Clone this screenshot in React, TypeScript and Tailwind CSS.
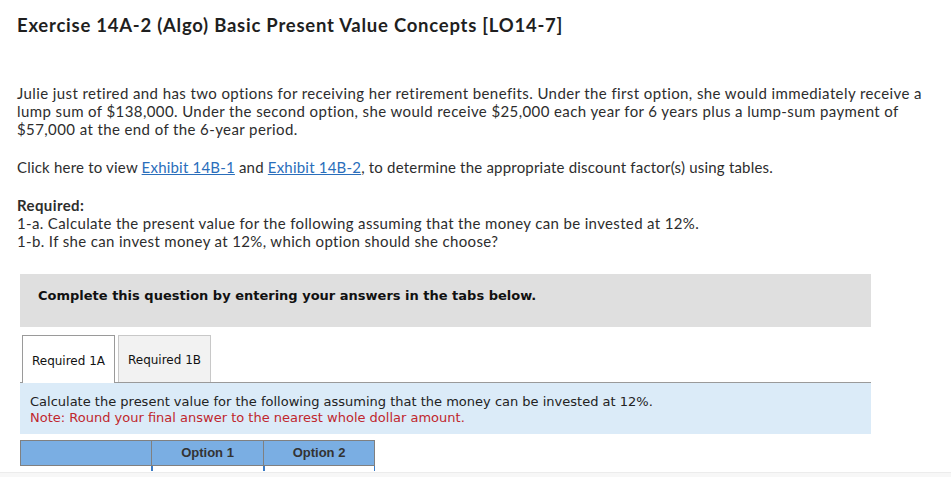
import React from "react";

export default function App() {
  return (
    <div className="w-[951px] h-[477px] overflow-hidden bg-white relative">
      <div className="pl-[17px] pr-[10px] pt-[12px] text-[#2d2d2d]" style={{ fontFamily: "Lato, 'Open Sans', sans-serif" }}>
        <h1 className="text-[18.5px] leading-[26px] font-bold tracking-[0.75px] text-[#1f1f1f] whitespace-nowrap">
          Exercise 14A-2 (Algo) Basic Present Value Concepts [LO14-7]
        </h1>
        <div className="mt-[46px] text-[15px] leading-[18px] tracking-[0.4px] whitespace-nowrap">
          <p>
            Julie just retired and has two options for receiving her retirement benefits. Under the first option, she would immediately receive a
            <br />
            lump sum of $138,000. Under the second option, she would receive $25,000 each year for 6 years plus a lump-sum payment of
            <br />
            $57,000 at the end of the 6-year period.
          </p>
          <p className="mt-[20px] tracking-[0.2px]">
            Click here to view <a className="text-[#2a6ebb] underline">Exhibit 14B-1</a> and{" "}
            <a className="text-[#2a6ebb] underline">Exhibit 14B-2</a>, to determine the appropriate discount factor(s) using tables.
          </p>
          <p className="mt-[20px] font-bold">Required:</p>
          <p className="tracking-[0.35px]">1-a. Calculate the present value for the following assuming that the money can be invested at 12%.</p>
          <p className="tracking-[0.35px]">1-b. If she can invest money at 12%, which option should she choose?</p>
        </div>
      </div>

      <div className="ml-[20px] w-[851px] mt-[24px]" style={{ fontFamily: "'DejaVu Sans', Verdana, sans-serif" }}>
        <div className="h-[53px] bg-[#dfdfdf] pl-[18px] pt-[14px]">
          <span className="block text-[13px] leading-[16px] font-bold text-[#111] whitespace-nowrap">
            Complete this question by entering your answers in the tabs below.
          </span>
        </div>

        <div className="mt-[8px] flex items-end pl-[2px] gap-[3px]">
          <div className="w-[93px] h-[48px] bg-white border border-b-0 border-[#9a9a9a] flex items-center justify-center pt-[2px] text-[12px] text-[#111] relative z-10 -mb-px">
            Required 1A
          </div>
          <div className="w-[93px] h-[47px] bg-[#f2f2f2] border border-b-0 border-[#c8c8c8] flex items-center justify-center pt-[2px] text-[12px] text-[#111]">
            Required 1B
          </div>
        </div>
        <div className="border-t border-[#9a9a9a] bg-[#dbebf8] h-[52px] pl-[10px] pt-[11px] text-[13px] leading-[16px] whitespace-nowrap">
          <div className="text-[#222]">
            Calculate the present value for the following assuming that the money can be invested at 12%.
          </div>
          <div className="text-[#c0272d]">Note: Round your final answer to the nearest whole dollar amount.</div>
        </div>

        <div className="mt-[6px] flex" style={{ fontFamily: "'Liberation Sans', Arial, sans-serif" }}>
          <div className="w-[131px] h-[26px] bg-[#7aaee3] border-t border-b border-l border-[#808080]" />
          <div className="w-[112px] h-[26px] bg-[#7aaee3] border-t border-b border-l border-[#808080] flex items-center justify-center text-[13px] font-bold text-[#333]">
            Option 1
          </div>
          <div className="w-[112px] h-[26px] bg-[#7aaee3] border border-[#808080] flex items-center justify-center text-[13px] font-bold text-[#333]">
            Option 2
          </div>
        </div>
        <div className="flex h-[5px]">
          <div className="w-[131px]" />
          <div className="w-[112px] border-l-2 border-[#3b7bc4]" />
          <div className="w-[112px] border-l-2 border-r border-[#3b7bc4]" />
        </div>
      </div>
      <div className="absolute left-0 right-0 top-[472px] h-[5px] bg-[#f7f7f7] border-t border-[#ececec]" />
    </div>
  );
}
